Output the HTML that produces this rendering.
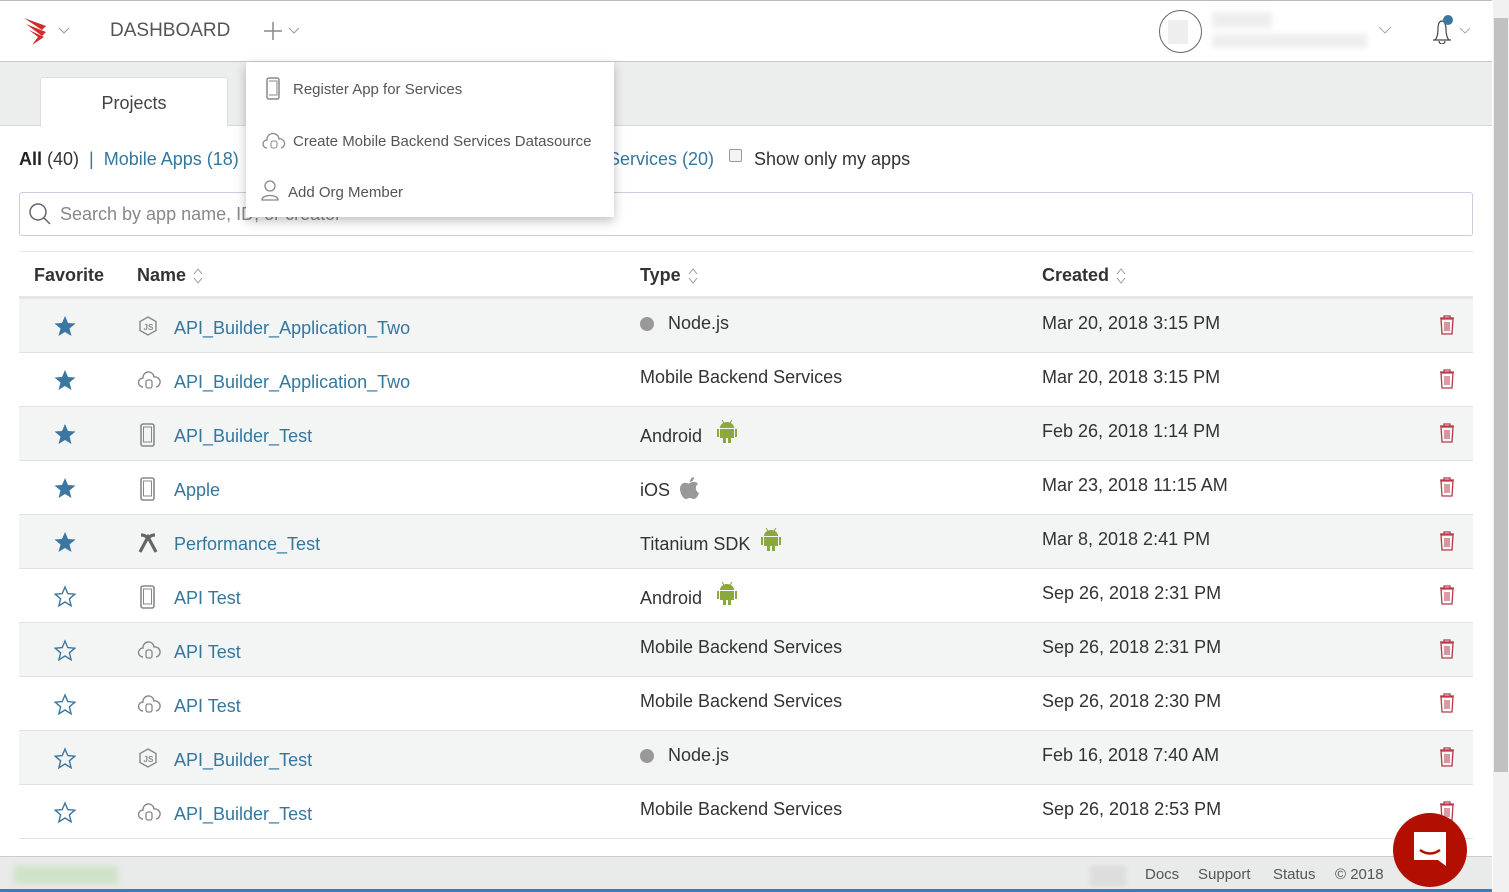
<!DOCTYPE html><html><head><meta charset="utf-8"><style>
*{box-sizing:border-box;margin:0;padding:0}
body{width:1509px;height:892px;overflow:hidden;font-family:"Liberation Sans",sans-serif;background:#fff;position:relative;color:#333}
.a{position:absolute}
.top{left:0;top:0;width:1492px;height:62px;background:#fff;border-top:1px solid #bbb;border-bottom:1px solid #c8c8c8}
.tabs{left:0;top:62px;width:1492px;height:64px;background:#eceeee;border-bottom:1px solid #d8d8d8}
.tab{left:40px;top:77px;width:188px;height:50px;background:#fff;border:1px solid #ddd;border-bottom:none;border-radius:3px 3px 0 0;text-align:center;line-height:50px;font-size:18px;color:#444}
.link{color:#33779f}
.row{left:19px;width:1454px;height:54px;border-bottom:1px solid #e2e2e2}
.g{background:#f3f4f4}
.t{position:absolute;font-size:18px;white-space:nowrap}
.dd{left:246px;top:62px;width:368px;height:155px;background:#fff;box-shadow:0 4px 10px rgba(0,0,0,.25);font-size:15px;color:#555}
.sb{left:1493px;top:0;width:16px;height:892px;background:#f1f1f1}
.srt{display:inline-block;vertical-align:middle;margin-left:6px}
</style></head><body>
<div class="a top"></div>
<svg class="a" style="left:22px;top:16px" width="32" height="30" viewBox="0 0 32 30"><path d="M2 2l22 8-4 4zM4 8l20 8-4 4zM7 14l15 7-12 8 6-8z" fill="#d32a2e"/></svg>
<svg class="a" style="left:58px;top:27px" width="12" height="8"><path d="M1 1l5 5 5-5" stroke="#999" fill="none"/></svg>
<div class="a" style="left:110px;top:20px;font-size:19px;color:#555">DASHBOARD</div>
<svg class="a" style="left:263px;top:21px" width="40" height="20"><path d="M10 1v18M1 10h18" stroke="#888" stroke-width="1.5"/><path d="M26 7l5 5 5-5" stroke="#999" fill="none"/></svg>
<div class="a" style="left:1159px;top:10px;width:43px;height:43px;border:1.5px solid #666;border-radius:50%"></div>
<div class="a" style="left:1168px;top:20px;width:20px;height:24px;background:#eee"></div>
<div class="a" style="left:1212px;top:12px;width:60px;height:16px;background:#eee;filter:blur(3px)"></div>
<div class="a" style="left:1212px;top:34px;width:155px;height:14px;background:#eee;filter:blur(3px)"></div>
<svg class="a" style="left:1378px;top:26px" width="14" height="9"><path d="M1 1l6 6 6-6" stroke="#aaa" fill="none"/></svg>
<svg class="a" style="left:1430px;top:12px" width="46" height="32"><path d="M3 28h18M5 28c2-2 3-5 3-11s2-8 4-8 4 3 4 8 1 9 3 11M9 29a3 3 0 0 0 6 0" stroke="#444" fill="none" stroke-width="1.2"/><circle cx="18" cy="8" r="5" fill="#3b77a1"/><path d="M30 16l5 5 5-5" stroke="#aaa" fill="none"/></svg>
<div class="a tabs"></div>
<div class="a tab">Projects</div>
<div class="a" style="left:19px;top:149px;font-size:18px"><b style="color:#222">All</b> (40) &nbsp;<span style="color:#33779f">|</span>&nbsp; <span class="link">Mobile Apps (18)</span></div>
<div class="a link" style="left:608px;top:149px;font-size:18px">Services (20)</div>
<div class="a" style="left:729px;top:149px;width:13px;height:13px;border:1px solid #999;border-radius:2px;background:#f4f4f4"></div>
<div class="a" style="left:754px;top:149px;font-size:18px">Show only my apps</div>
<div class="a" style="left:19px;top:192px;width:1454px;height:44px;border:1px solid #ccd;border-radius:3px"></div>
<svg class="a" style="left:28px;top:202px" width="24" height="24"><circle cx="10" cy="10" r="8" stroke="#666" stroke-width="1.5" fill="none"/><path d="M16 16l6 6" stroke="#666" stroke-width="1.5"/></svg>
<div class="a" style="left:60px;top:204px;font-size:18px;color:#888">Search by app name, ID, or creator</div>
<div class="a" style="left:19px;top:251px;width:1454px;height:48px;border-top:1px solid #e6e6e6;border-bottom:3px solid #e6e6e6"></div>
<div class="a" style="left:34px;top:265px;font-size:18px;font-weight:bold;color:#333">Favorite</div>
<div class="a" style="left:137px;top:265px;font-size:18px;font-weight:bold;color:#333">Name<svg class="srt" width="12" height="18"><path d="M2 7l4-5 4 5M2 11l4 5 4-5" stroke="#999" fill="none"/></svg></div>
<div class="a" style="left:640px;top:265px;font-size:18px;font-weight:bold;color:#333">Type<svg class="srt" width="12" height="18"><path d="M2 7l4-5 4 5M2 11l4 5 4-5" stroke="#999" fill="none"/></svg></div>
<div class="a" style="left:1042px;top:265px;font-size:18px;font-weight:bold;color:#333">Created<svg class="srt" width="12" height="18"><path d="M2 7l4-5 4 5M2 11l4 5 4-5" stroke="#999" fill="none"/></svg></div>

<div id="rows"></div>
<script>
var d=[[1,'js','API_Builder_Application_Two','node','Node.js','Mar 20, 2018 3:15 PM'],
[1,'c','API_Builder_Application_Two','','Mobile Backend Services','Mar 20, 2018 3:15 PM'],
[1,'p','API_Builder_Test','and','Android','Feb 26, 2018 1:14 PM'],
[1,'p','Apple','ios','iOS','Mar 23, 2018 11:15 AM'],
[1,'x','Performance_Test','and','Titanium SDK','Mar 8, 2018 2:41 PM'],
[0,'p','API Test','and','Android','Sep 26, 2018 2:31 PM'],
[0,'c','API Test','','Mobile Backend Services','Sep 26, 2018 2:31 PM'],
[0,'c','API Test','','Mobile Backend Services','Sep 26, 2018 2:30 PM'],
[0,'js','API_Builder_Test','node','Node.js','Feb 16, 2018 7:40 AM'],
[0,'c','API_Builder_Test','','Mobile Backend Services','Sep 26, 2018 2:53 PM']];
var ic={js:'<path d="M11 2l8 4.5v9L11 20l-8-4.5v-9z" stroke="#888" fill="none" stroke-width="1.4"/><text x="6.5" y="15" font-size="8" fill="#888" font-family="Liberation Sans" font-weight="bold">JS</text>',
c:'<path d="M6 18a4.5 4.5 0 0 1 0-9 5.5 5.5 0 0 1 11-1 4.5 4.5 0 0 1 2 10" stroke="#888" fill="none" stroke-width="1.4"/><rect x="9" y="11" width="6" height="8" rx="2" stroke="#888" fill="none" stroke-width="1.3"/>',
p:'<rect x="4" y="1" width="13" height="22" rx="2" stroke="#888" fill="none" stroke-width="1.6"/><path d="M6.5 4h8v15h-8z" stroke="#888" fill="none"/>',
x:'<path d="M3 21L11 6l8 15M4 4c4 0 7 2 7 6M18 4c-4 0-7 2-7 6" stroke="#666" fill="none" stroke-width="3.2"/>'};
var star1='<path d="M11 1l3 7 7.5.5-6 5 2 7.5L11 17l-6.5 4 2-7.5-6-5L8 8z" fill="#3b77a1"/>';
var star0='<path d="M11 2l2.8 6.6 7 .6-5.4 4.6 1.7 7L11 17l-6.1 3.8 1.7-7L1.2 9.2l7-.6z" stroke="#3b77a1" stroke-width="1.4" fill="none"/>';
var h='';
d.forEach(function(r,i){var y=299+i*54;
h+='<div class="a row'+(i%2==0?' g':'')+'" style="top:'+y+'px"></div>';
h+='<svg class="a" style="left:54px;top:'+(y+16)+'px" width="22" height="22">'+(r[0]?star1:star0)+'</svg>';
h+='<svg class="a" style="left:137px;top:'+(y+16)+'px" width="24" height="24">'+ic[r[1]]+'</svg>';
h+='<div class="t link" style="left:174px;top:'+(y+19)+'px">'+r[2]+'</div>';
var tx=640;
if(r[3]=='node'){h+='<div class="a" style="left:640px;top:'+(y+18)+'px;width:14px;height:14px;border-radius:50%;background:#999"></div>';tx=668;}
h+='<div class="t" style="left:'+tx+'px;top:'+(y+(r[3]=='and'||r[3]=='ios'?19:14))+'px">'+r[4]+'</div>';
if(r[3]=='and'){var ax=r[4]=='Android'?716:760;h+='<svg class="a" style="left:'+ax+'px;top:'+(y+12)+'px" width="22" height="26"><path d="M4 9a7 6 0 0 1 14 0zM4 10h14v9H4zM1 10h2v8H1zM19 10h2v8h-2zM7 19h3v5H7zM12 19h3v5h-3z" fill="#8aa83b"/><path d="M6 1l2 3M16 1l-2 3" stroke="#8aa83b"/></svg>';}
if(r[3]=='ios'){h+='<svg class="a" style="left:679px;top:'+(y+15)+'px" width="22" height="26"><path d="M11 7c3-2 7-1 8 1-3 2-3 7 1 9-1 3-3 6-5 6s-2-1-4-1-3 1-4 1c-3 0-6-6-6-10 0-5 4-7 6-6 2 0 3 1 4 0zM11 6c0-3 2-5 4-5 0 3-2 5-4 5z" fill="#999"/></svg>';}
h+='<div class="t" style="left:1042px;top:'+(y+14)+'px">'+r[5]+'</div>';
h+='<svg class="a" style="left:1439px;top:'+(y+16)+'px" width="16" height="20"><path d="M1 3h14M5 3V1h6v2M2 4h12l-1 15H3z" stroke="#b53a4a" fill="none" stroke-width="1.3"/><path d="M6 7v9M8 7v9M10 7v9" stroke="#b53a4a"/></svg>';
});
document.getElementById('rows').innerHTML=h;
</script>
<div class="a dd">
<svg class="a" style="left:19px;top:15px" width="16" height="24"><rect x="2" y="1" width="12" height="21" rx="2" stroke="#888" fill="none" stroke-width="1.5"/><path d="M4 4h8v14H4" stroke="#888" fill="none"/></svg>
<div class="a" style="left:47px;top:19px">Register App for Services</div>
<svg class="a" style="left:15px;top:69px" width="26" height="20"><path d="M6 17a4 4 0 0 1 0-8 6 6 0 0 1 12-1 4 4 0 0 1 2 9" stroke="#888" fill="none" stroke-width="1.3"/><rect x="10" y="10" width="6" height="7" rx="2" stroke="#888" fill="none"/></svg>
<div class="a" style="left:47px;top:71px">Create Mobile Backend Services Datasource</div>
<svg class="a" style="left:15px;top:118px" width="18" height="22"><circle cx="9" cy="6" r="5" stroke="#888" fill="none" stroke-width="1.3"/><path d="M1 20c0-6 16-6 16 0z" stroke="#888" fill="none" stroke-width="1.3"/></svg>
<div class="a" style="left:42px;top:122px">Add Org Member</div>
</div>
<div class="a" style="left:0;top:856px;width:1492px;height:36px;background:#e9eaea;border-top:1px solid #ccc;border-bottom:3px solid #3a7abf"></div>
<div class="a" style="left:14px;top:866px;width:104px;height:18px;background:#cfe3c8;filter:blur(3px)"></div>
<div class="a" style="left:1090px;top:866px;width:36px;height:20px;background:#ddd;filter:blur(2px)"></div>
<div class="a" style="left:1145px;top:866px;font-size:15px;color:#555">Docs</div>
<div class="a" style="left:1198px;top:866px;font-size:15px;color:#555">Support</div>
<div class="a" style="left:1273px;top:866px;font-size:15px;color:#555">Status</div>
<div class="a" style="left:1335px;top:866px;font-size:15px;color:#555">© 2018</div>
<div class="a" style="left:1393px;top:813px;width:74px;height:74px;border-radius:50%;background:#b30f00"></div>
<svg class="a" style="left:1410px;top:830px" width="40" height="40"><path d="M4 2h32v34l-8-6H4z" fill="#fff"/><path d="M10 20q10 7 20 0" stroke="#b30f00" stroke-width="2.5" fill="none"/></svg>
<div class="a sb"></div>
<div class="a" style="left:1494px;top:18px;width:14px;height:754px;background:#c1c1c1"></div>
</body></html>
